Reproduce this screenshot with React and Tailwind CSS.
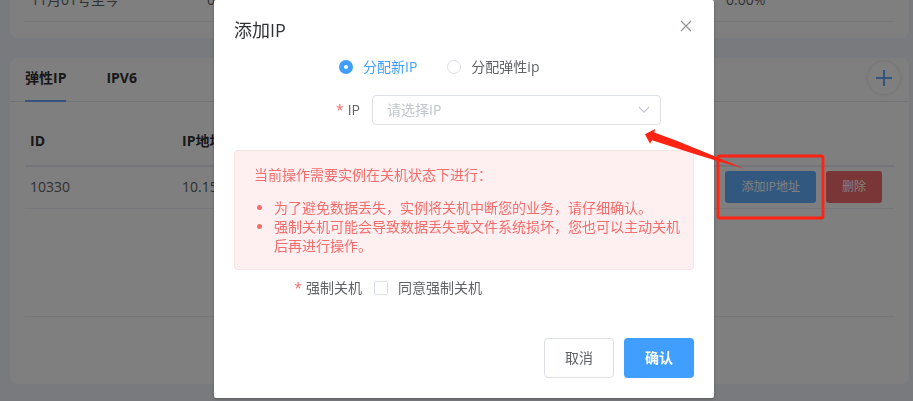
import { useState } from "react"

const tabs = ["弹性IP", "IPV6"]

const notices = [
    "为了避免数据丢失，实例将关机中断您的业务，请仔细确认。",
    "强制关机可能会导致数据丢失或文件系统损坏，您也可以主动关机后再进行操作。",
]

const Radio = ({ label, checked, onChange }) => (
    <label className={`flex items-center gap-2.5 ${checked ? "text-[#409eff]" : "text-[#606266]"}`}>
        <input
            type="radio"
            name="mode"
            checked={checked}
            onChange={onChange}
            className="size-3.5 appearance-none rounded-full border border-[#dcdfe6] bg-white checked:border-[5px] checked:border-[#409eff]"
        />
        {label}
    </label>
)

const TrafficCard = () => (
    <section className="-mt-[21px] rounded-lg bg-white px-[15px] pb-4">
        <table className="w-full table-fixed border-collapse text-[#606266]">
            <tbody>
                <tr className="h-[42px] border-b border-[#ebeef5]">
                    <td className="w-44 pl-1.5">11月01号至今</td>
                    <td className="pl-1.5">0.00%</td>
                    <td className="w-[174px] pl-1.5">0.00%</td>
                </tr>
            </tbody>
        </table>
    </section>
)

const IpCard = () => {
    const [tab, setTab] = useState(tabs[0])

    return (
        <section className="mt-5 rounded-lg bg-white pb-[67px]">
            <div className="flex h-11 items-start justify-between border-b border-[#e4e7ed] pr-[9px] pl-[15px]">
                <nav className="flex gap-10 self-stretch">
                    {tabs.map((name) => (
                        <button
                            key={name}
                            onClick={() => setTab(name)}
                            className={`-mb-px border-b-2 pb-0.5 font-bold text-[#303133] ${tab === name ? "border-[#66a9ff]" : "border-transparent"}`}
                        >
                            {name}
                        </button>
                    ))}
                </nav>
                <button aria-label="添加" className="mt-1 flex size-8 items-center justify-center rounded-full shadow-[0_0_4px_rgba(0,0,0,0.14)]">
                    <svg viewBox="0 0 16 16" className="size-4" stroke="#66a9ff" strokeWidth="2">
                        <path d="M8 0v16M0 8h16" />
                    </svg>
                </button>
            </div>

            <div className="mx-[15px] h-[215px] border-b border-[#ebeef5] pt-4">
                <table className="w-full table-fixed border-collapse text-left">
                    <thead className="text-[#303133]">
                        <tr className="h-12 border-b-2 border-[#e9ebf4]">
                            <th className="w-[152px] pl-[5px] font-bold">ID</th>
                            <th className="pl-[5px] font-bold">IP地址</th>
                            <th className="w-[181px]"></th>
                        </tr>
                    </thead>
                    <tbody className="text-[#606266]">
                        <tr className="h-[43px] border-b border-[#ebeef5]">
                            <td className="pl-[5px]">10330</td>
                            <td className="pl-[5px]">10.15</td>
                            <td>
                                <div className="flex justify-end gap-2.5 pr-3 text-xs text-white">
                                    <button className="h-8 shrink-0 rounded-[3px] bg-[#66b1ff] px-4">添加IP地址</button>
                                    <button className="h-8 shrink-0 rounded-[3px] bg-[#f56c6c] px-4">删除</button>
                                </div>
                            </td>
                        </tr>
                    </tbody>
                </table>
            </div>
        </section>
    )
}

const AddIpDialog = () => {
    const [mode, setMode] = useState("new")
    const [agree, setAgree] = useState(false)

    return (
        <div
            role="dialog"
            aria-labelledby="dialog-title"
            className="w-full max-w-[500px] rounded-[2px] bg-white px-5 pb-5 text-[#606266] shadow-[0_1px_3px_rgba(0,0,0,0.3)]"
        >
            <header className="flex items-start justify-between pt-4">
                <h2 id="dialog-title" className="text-lg leading-7 text-[#303133]">添加IP</h2>
                <button aria-label="关闭" className="mt-1 mr-0.5">
                    <svg viewBox="0 0 12 12" className="size-3" stroke="#909399" strokeWidth="1.2">
                        <path d="M1 1l10 10M11 1L1 11" />
                    </svg>
                </button>
            </header>

            <div className="mt-[11px] flex h-6 items-center gap-[30px] pl-[105px]">
                <Radio label="分配新IP" checked={mode === "new"} onChange={() => setMode("new")} />
                <Radio label="分配弹性ip" checked={mode === "elastic"} onChange={() => setMode("elastic")} />
            </div>

            <div className="mt-4 flex items-center gap-3">
                <label htmlFor="ip" className="w-[126px] text-right">
                    <span className="mr-1 text-[#f56c6c]">*</span>IP
                </label>
                <div className="relative mr-[33px] flex-1">
                    <select
                        id="ip"
                        defaultValue=""
                        className="block h-[30px] w-full appearance-none rounded border border-[#dcdfe6] bg-white px-3.5 text-[#c0c4cc]"
                    >
                        <option value="">请选择IP</option>
                    </select>
                    <svg
                        viewBox="0 0 12 8"
                        className="pointer-events-none absolute top-[11px] right-[11px] h-2 w-3"
                        fill="none"
                        stroke="#c0c4cc"
                        strokeWidth="1.2"
                    >
                        <path d="M1 1.2l5 5 5-5" />
                    </svg>
                </div>
            </div>

            <div className="mt-[25px] h-[120px] rounded border border-[#fde2e2] bg-[#fef0f0] pt-3.5 pr-2.5 pl-[19px] leading-[19px] text-[#f56c6c]">
                <p>当前操作需要实例在关机状态下进行：</p>
                <ul className="mt-3.5 list-disc pl-5">
                    {notices.map((text) => (
                        <li key={text}>{text}</li>
                    ))}
                </ul>
            </div>

            <div className="mt-2 flex items-center gap-3">
                <span className="w-32 text-right">
                    <span className="mr-1 text-[#f56c6c]">*</span>强制关机
                </span>
                <label className="flex items-center gap-2.5">
                    <input
                        type="checkbox"
                        checked={agree}
                        onChange={(e) => setAgree(e.target.checked)}
                        className="size-3.5 appearance-none rounded-[2px] border border-[#dcdfe6] bg-white checked:bg-[#409eff]"
                    />
                    同意强制关机
                </label>
            </div>

            <footer className="mt-10 flex justify-end gap-2.5">
                <button className="h-10 w-[70px] rounded border border-[#dcdfe6] bg-white">取消</button>
                <button className="h-10 w-[70px] rounded bg-[#409eff] font-bold text-white">确认</button>
            </footer>
        </div>
    )
}

const App = () => {
    return (
        <div className="relative min-h-screen overflow-hidden bg-[#f3f5fb] font-['Open_Sans','Noto_Sans_CJK_SC',sans-serif] text-sm leading-5">
            <main className="flow-root pr-1 pl-2.5">
                <TrafficCard />
                <IpCard />
            </main>

            {/* Dialog over the dimmed page */}
            <div className="fixed inset-0 flex items-start justify-center bg-black/50 pl-[15px]">
                <AddIpDialog />
            </div>

            {/* Red marker and arrow */}
            <svg className="pointer-events-none absolute top-0 left-0" width="913" height="401" viewBox="0 0 913 401" aria-hidden="true">
                <rect x="718" y="156" width="105" height="62" rx="1.5" fill="none" stroke="#ff2313" strokeWidth="2.8" />
                <path
                    d="M645 134.3L655 129L654.3 132.4L676 140.5L718.3 157.7L744.5 168.8L715 160.2L693 153.6L652 140.3L650 143.8Z"
                    fill="#ff2313"
                />
            </svg>
        </div>
    )
}

export default App
